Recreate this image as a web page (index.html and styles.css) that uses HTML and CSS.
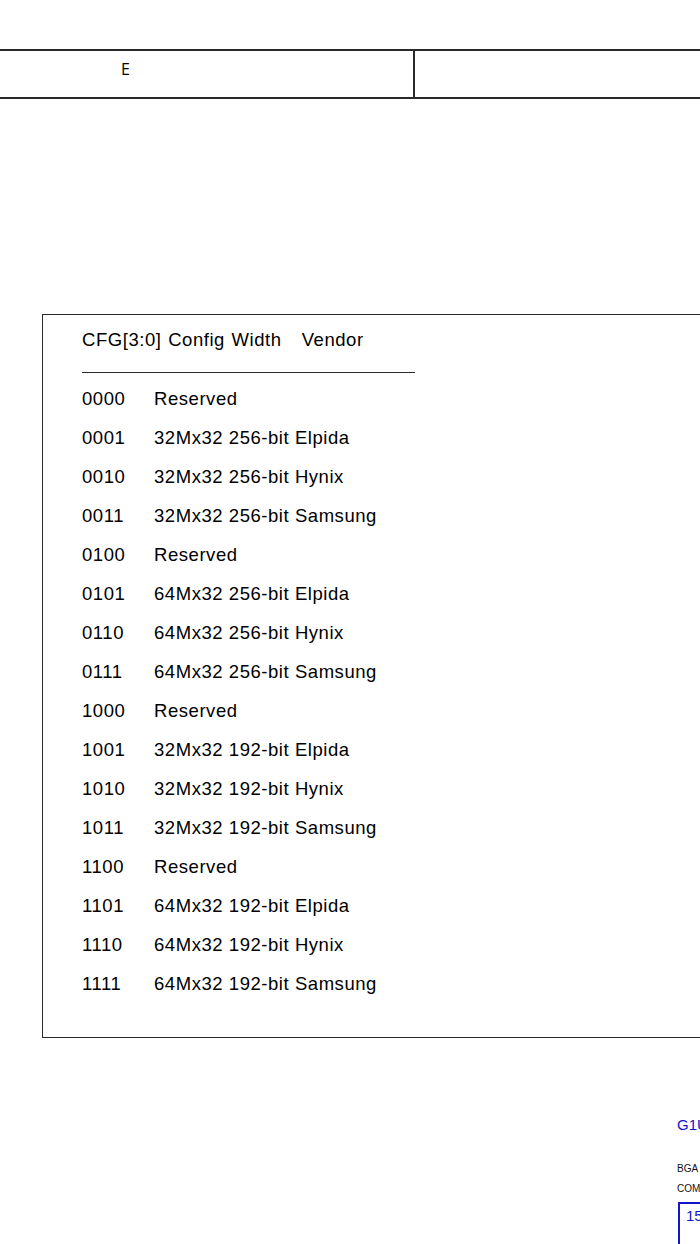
FILE: index.html
```html
<!DOCTYPE html>
<html>
<head>
<meta charset="utf-8">
<link rel="stylesheet" href="styles.css">
</head>
<body>
<div class="page">
  <div class="topbar">
    <div class="topcell topcell-left">E</div>
    <div class="topcell topcell-right"></div>
  </div>

  <div class="cfgbox">
    <div class="cfghead">CFG[3:0] Config Width&nbsp;&nbsp; Vendor</div>
    <div class="cfgrows">
      <div class="row"><span class="code">0000</span><span class="desc">Reserved</span></div>
      <div class="row"><span class="code">0001</span><span class="desc">32Mx32 256-bit Elpida</span></div>
      <div class="row"><span class="code">0010</span><span class="desc">32Mx32 256-bit Hynix</span></div>
      <div class="row"><span class="code">0011</span><span class="desc">32Mx32 256-bit Samsung</span></div>
      <div class="row"><span class="code">0100</span><span class="desc">Reserved</span></div>
      <div class="row"><span class="code">0101</span><span class="desc">64Mx32 256-bit Elpida</span></div>
      <div class="row"><span class="code">0110</span><span class="desc">64Mx32 256-bit Hynix</span></div>
      <div class="row"><span class="code">0111</span><span class="desc">64Mx32 256-bit Samsung</span></div>
      <div class="row"><span class="code">1000</span><span class="desc">Reserved</span></div>
      <div class="row"><span class="code">1001</span><span class="desc">32Mx32 192-bit Elpida</span></div>
      <div class="row"><span class="code">1010</span><span class="desc">32Mx32 192-bit Hynix</span></div>
      <div class="row"><span class="code">1011</span><span class="desc">32Mx32 192-bit Samsung</span></div>
      <div class="row"><span class="code">1100</span><span class="desc">Reserved</span></div>
      <div class="row"><span class="code">1101</span><span class="desc">64Mx32 192-bit Elpida</span></div>
      <div class="row"><span class="code">1110</span><span class="desc">64Mx32 192-bit Hynix</span></div>
      <div class="row"><span class="code">1111</span><span class="desc">64Mx32 192-bit Samsung</span></div>
    </div>
  </div>

  <div class="titleblock">
    <div class="tb-title">G1U</div>
    <div class="tb-small tb-bga">BGA</div>
    <div class="tb-small">COM</div>
    <div class="tb-box">15</div>
  </div>
</div>
</body>
</html>
```

FILE: styles.css
```css
html, body {
  margin: 0;
  padding: 0;
  background: #ffffff;
}

body {
  width: 700px;
  height: 1244px;
  overflow: hidden;
  font-family: "Liberation Sans", Arial, sans-serif;
  color: #000000;
}

.page {
  width: 700px;
  overflow: hidden;
}

.topbar {
  margin-top: 49px;
  width: 900px;
  display: grid;
  grid-template-columns: 415px 1fr;
  border-top: 2px solid #2a2a2a;
  border-bottom: 2px solid #2a2a2a;
  height: 46px;
}

.topcell {
  height: 46px;
}

.topcell-left {
  border-right: 2px solid #2a2a2a;
  padding-left: 121px;
  padding-top: 7px;
  box-sizing: border-box;
  font-family: "Open Sans", "DejaVu Sans", sans-serif;
  font-size: 16px;
  line-height: 22px;
}

.cfgbox {
  margin-top: 215px;
  margin-left: 42px;
  width: 900px;
  border: 1.5px solid #2a2a2a;
  box-sizing: border-box;
  padding: 5px 0 34px 39px;
  font-size: 18.5px;
  letter-spacing: 0.55px;
}

.cfghead {
  line-height: 39px;
  padding-bottom: 13px;
  border-bottom: 1.5px solid #2a2a2a;
  width: 333px;
  word-spacing: 1px;
  white-space: nowrap;
}

.cfgrows {
  display: flex;
  flex-direction: column;
}

.row {
  display: flex;
  height: 39px;
  line-height: 39px;
  white-space: nowrap;
}

.row:first-child {
  margin-top: 6px;
}

.code {
  width: 72px;
}

.titleblock {
  margin-top: 77px;
  padding-left: 677px;
  white-space: nowrap;
}

.tb-title {
  color: #1414c8;
  font-size: 15px;
  line-height: 20px;
}

.tb-small {
  font-size: 10px;
  line-height: 20px;
  color: #111111;
}

.tb-bga {
  margin-top: 24px;
}

.tb-box {
  margin-top: 3px;
  margin-left: 1px;
  width: 60px;
  height: 60px;
  border: 2px solid #1414c8;
  color: #1414c8;
  font-size: 15px;
  padding: 3px 0 0 6px;
}
```
